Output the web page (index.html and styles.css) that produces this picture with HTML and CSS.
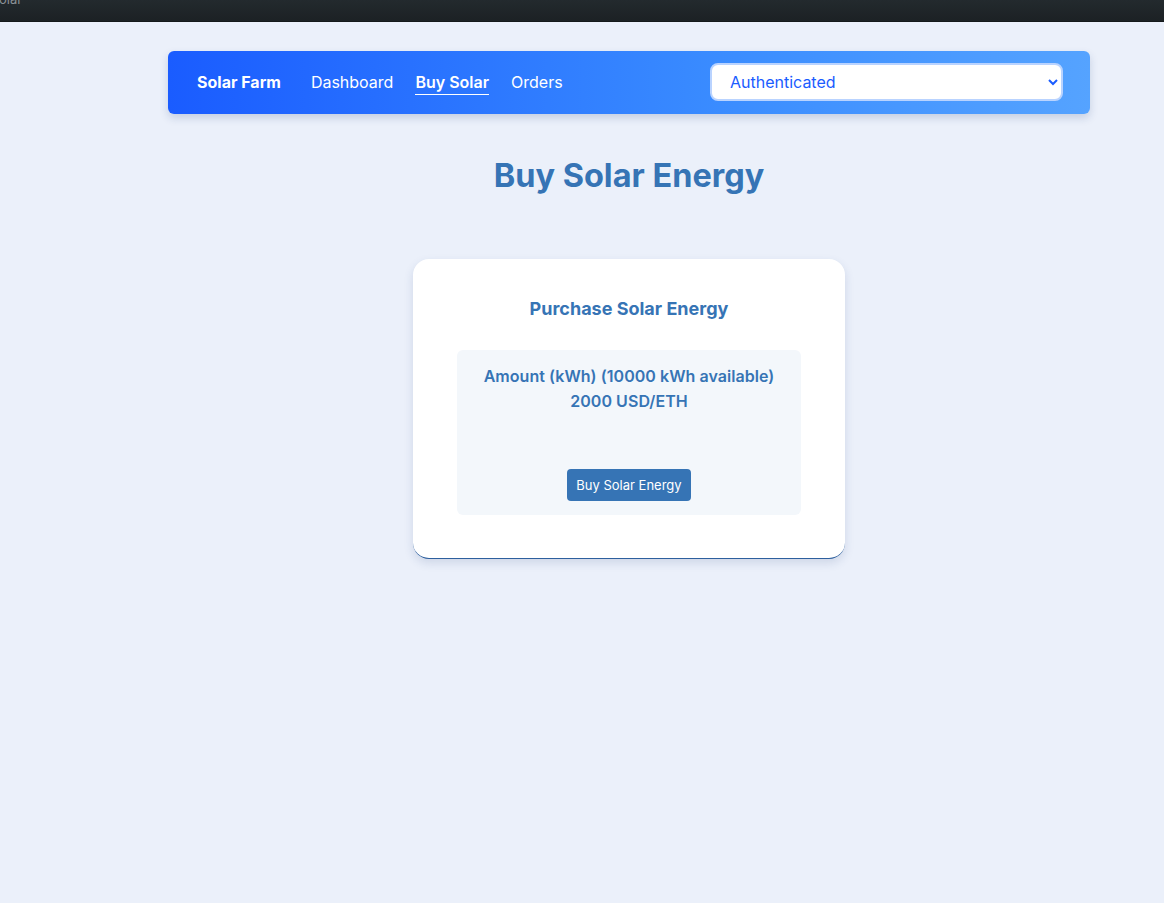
FILE: index.html
```html
<!DOCTYPE html>
<html>
<head>
<meta charset="utf-8">
<link rel="stylesheet" href="styles.css">
</head>
<body>
<div class="topbar"><span class="topbar-text">olar</span></div>
<div class="page">
  <nav class="nav">
    <div class="nav-links">
      <span class="brand">Solar Farm</span>
      <a class="link">Dashboard</a>
      <a class="link active">Buy Solar</a>
      <a class="link">Orders</a>
    </div>
    <select class="auth">
      <option>Authenticated</option>
    </select>
  </nav>
  <h1 class="title">Buy Solar Energy</h1>
  <div class="card">
    <h2 class="card-title">Purchase Solar Energy</h2>
    <div class="panel">
      <div class="label">Amount (kWh) (10000 kWh available)<br>2000 USD/ETH</div>
      <button class="btn">Buy Solar Energy</button>
    </div>
  </div>
</div>
</body>
</html>
```
FILE: styles.css
```css
* { box-sizing: border-box; }
html, body { margin: 0; padding: 0; }
body {
  background: #ebf0fa;
  font-family: Inter, "Noto Sans", sans-serif;
  min-height: 903px;
}
.topbar {
  height: 22px;
  background: linear-gradient(#232a2e, #1c2124);
  overflow: hidden;
  border-bottom: 1px solid #15191b;
}
.topbar-text {
  display: block;
  color: #8a9095;
  font-size: 13px;
  line-height: 13px;
  margin-top: -7px;
  margin-left: -1px;
}
.page {
  margin-left: 168px;
  width: 922px;
  padding-top: 29px;
}
.nav {
  height: 63px;
  border-radius: 6px;
  background: linear-gradient(90deg, #1a5cff 0%, #3a8cff 60%, #55a3ff 100%);
  box-shadow: 0 4px 8px rgba(30, 60, 120, 0.18);
  display: flex;
  align-items: center;
  justify-content: space-between;
  padding: 0 27px 2px 29px;
}
.nav-links {
  display: flex;
  align-items: center;
  gap: 22px;
  color: #fff;
}
.brand {
  font-weight: 700;
  font-size: 16px;
  margin-right: 8px;
}
.link {
  font-size: 16px;
  color: #fff;
  cursor: pointer;
}
.link.active {
  font-weight: 600;
  border-bottom: 1.5px solid #fff;
  padding-bottom: 2px;
  margin-top: 3px;
}
.auth {
  width: 353px;
  height: 38px;
  border-radius: 8px;
  border: 2px solid #b9d3ff;
  background: #fff;
  color: #1a5cff;
  font-family: Inter, sans-serif;
  font-size: 16px;
  padding: 0 14px 0 14px;
  margin-top: 1px;
}
.title {
  text-align: center;
  color: #3674b5;
  font-size: 32.5px;
  font-weight: 700;
  margin: 42px 0 0;
  line-height: 40px;
}
.card {
  width: 432px;
  margin: 63px auto 0;
  background: #fff;
  border-radius: 16px;
  border-bottom: 1.5px solid #2d5f9e;
  box-shadow: 0 4px 10px rgba(40, 70, 130, 0.15);
  padding: 38px 44px 43px;
}
.card-title {
  text-align: center;
  color: #3674b5;
  font-size: 18px;
  font-weight: 700;
  margin: 0 0 29px;
  line-height: 24px;
}
.panel {
  background: #f3f7fb;
  border-radius: 6px;
  padding: 14px 0 14px;
  display: flex;
  flex-direction: column;
  align-items: center;
}
.label {
  text-align: center;
  color: #3674b5;
  font-size: 16px;
  font-weight: 600;
  line-height: 25px;
  letter-spacing: 0.05px;
}
.btn {
  margin-top: 55px;
  background: #3674b5;
  color: #fff;
  border: none;
  border-radius: 4px;
  font-family: Inter, sans-serif;
  font-size: 13px;
  height: 32px;
  width: 124px;
  padding: 0;
}
```
